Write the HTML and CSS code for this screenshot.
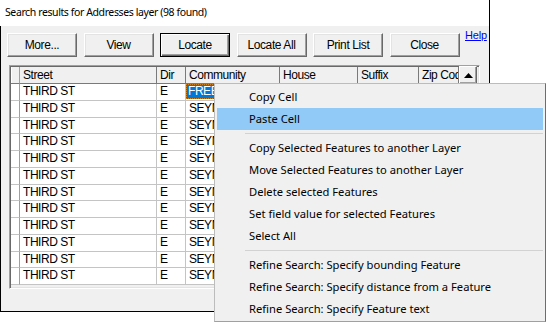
FILE: index.html
```html
<!DOCTYPE html>
<html>
<head>
<meta charset="utf-8">
<link rel="stylesheet" href="styles.css">
</head>
<body>
<div class="window">
  <div class="titlebar">Search results for Addresses layer (98 found)</div>
  <div class="body">
    <div class="toolbar">
      <button class="btn">More...</button>
      <button class="btn">View</button>
      <button class="btn default">Locate</button>
      <button class="btn">Locate All</button>
      <button class="btn">Print List</button>
      <button class="btn">Close</button>
      <a class="help" href="#">Help</a>
    </div>
    <div class="grid">
      <div class="row head">
        <div class="cell rh"></div>
        <div class="cell c-street">Street</div>
        <div class="cell c-dir">Dir</div>
        <div class="cell c-comm">Community</div>
        <div class="cell c-house">House</div>
        <div class="cell c-suffix">Suffix</div>
        <div class="cell c-zip">Zip Cod</div>
        <div class="cell scrollbtn"><svg width="9" height="5" viewBox="0 0 9 5"><path d="M0 5 L4.5 0 L9 5 Z" fill="#000"/></svg></div>
      </div>
      <div class="row"><div class="cell rh"></div><div class="cell c-street">THIRD ST</div><div class="cell c-dir">E</div><div class="cell c-comm"><span class="sel">FREEPORT</span></div><div class="cell c-house"></div><div class="cell c-suffix"></div><div class="cell c-zip"></div></div>
      <div class="row"><div class="cell rh"></div><div class="cell c-street">THIRD ST</div><div class="cell c-dir">E</div><div class="cell c-comm">SEYMOUR</div><div class="cell c-house"></div><div class="cell c-suffix"></div><div class="cell c-zip"></div></div>
      <div class="row"><div class="cell rh"></div><div class="cell c-street">THIRD ST</div><div class="cell c-dir">E</div><div class="cell c-comm">SEYMOUR</div><div class="cell c-house"></div><div class="cell c-suffix"></div><div class="cell c-zip"></div></div>
      <div class="row"><div class="cell rh"></div><div class="cell c-street">THIRD ST</div><div class="cell c-dir">E</div><div class="cell c-comm">SEYMOUR</div><div class="cell c-house"></div><div class="cell c-suffix"></div><div class="cell c-zip"></div></div>
      <div class="row"><div class="cell rh"></div><div class="cell c-street">THIRD ST</div><div class="cell c-dir">E</div><div class="cell c-comm">SEYMOUR</div><div class="cell c-house"></div><div class="cell c-suffix"></div><div class="cell c-zip"></div></div>
      <div class="row"><div class="cell rh"></div><div class="cell c-street">THIRD ST</div><div class="cell c-dir">E</div><div class="cell c-comm">SEYMOUR</div><div class="cell c-house"></div><div class="cell c-suffix"></div><div class="cell c-zip"></div></div>
      <div class="row"><div class="cell rh"></div><div class="cell c-street">THIRD ST</div><div class="cell c-dir">E</div><div class="cell c-comm">SEYMOUR</div><div class="cell c-house"></div><div class="cell c-suffix"></div><div class="cell c-zip"></div></div>
      <div class="row"><div class="cell rh"></div><div class="cell c-street">THIRD ST</div><div class="cell c-dir">E</div><div class="cell c-comm">SEYMOUR</div><div class="cell c-house"></div><div class="cell c-suffix"></div><div class="cell c-zip"></div></div>
      <div class="row"><div class="cell rh"></div><div class="cell c-street">THIRD ST</div><div class="cell c-dir">E</div><div class="cell c-comm">SEYMOUR</div><div class="cell c-house"></div><div class="cell c-suffix"></div><div class="cell c-zip"></div></div>
      <div class="row"><div class="cell rh"></div><div class="cell c-street">THIRD ST</div><div class="cell c-dir">E</div><div class="cell c-comm">SEYMOUR</div><div class="cell c-house"></div><div class="cell c-suffix"></div><div class="cell c-zip"></div></div>
      <div class="row"><div class="cell rh"></div><div class="cell c-street">THIRD ST</div><div class="cell c-dir">E</div><div class="cell c-comm">SEYMOUR</div><div class="cell c-house"></div><div class="cell c-suffix"></div><div class="cell c-zip"></div></div>
      <div class="row"><div class="cell rh"></div><div class="cell c-street">THIRD ST</div><div class="cell c-dir">E</div><div class="cell c-comm">SEYMOUR</div><div class="cell c-house"></div><div class="cell c-suffix"></div><div class="cell c-zip"></div></div>
    </div>
  </div>
</div>

<div class="menu">
  <div class="item">Copy Cell</div>
  <div class="item hover">Paste Cell</div>
  <div class="sep"></div>
  <div class="item">Copy Selected Features to another Layer</div>
  <div class="item">Move Selected Features to another Layer</div>
  <div class="item">Delete selected Features</div>
  <div class="item">Set field value for selected Features</div>
  <div class="item">Select All</div>
  <div class="sep"></div>
  <div class="item">Refine Search: Specify bounding Feature</div>
  <div class="item">Refine Search: Specify distance from a Feature</div>
  <div class="item">Refine Search: Specify Feature text</div>
</div>
</body>
</html>
```

FILE: styles.css
```css
* { box-sizing: border-box; }
html, body {
  margin: 0;
  padding: 0;
  background: #fff;
}
body {
  width: 547px;
  height: 323px;
  overflow: hidden;
  position: relative;
  font-family: "Liberation Sans", Arial, sans-serif;
}
.window {
  width: 490px;
  height: 312px;
  border-right: 1px solid #000;
  border-bottom: 1px solid #000;
  display: flex;
  flex-direction: column;
}
.titlebar {
  height: 26px;
  background: #fff;
  padding-left: 5px;
  padding-top: 5px;
  font-family: "Noto Sans", sans-serif;
  font-size: 10.5px;
  letter-spacing: -0.4px;
  color: #000;
}
.body {
  flex: 1;
  background: #f0f0f0;
  border-left: 1px solid #000;
}
.toolbar {
  display: flex;
  align-items: flex-start;
  gap: 6.5px;
  padding: 7px 0 0 6px;
  height: 31px;
}
.btn {
  width: 70px;
  height: 24px;
  padding: 0;
  margin: 0;
  background: #f0f0f0;
  border: 1px solid;
  border-color: #fff #696969 #696969 #fff;
  box-shadow: inset -1px -1px 0 #a0a0a0, inset 1px 1px 0 #e3e3e3;
  font-family: "Liberation Sans", Arial, sans-serif;
  font-size: 12px;
  letter-spacing: -0.4px;
  color: #000;
}
.btn.default {
  border-color: #000;
  box-shadow: inset 1px 1px 0 #fff, inset -1px -1px 0 #696969, inset -2px -2px 0 #a0a0a0;
}
.help {
  margin-left: -1px;
  margin-top: -4px;
  font-size: 11px;
  letter-spacing: -0.2px;
  color: #0000ff;
  text-decoration: underline;
}
.grid {
  margin: 8px 0 0 8px;
  width: 471px;
  height: 224px;
  border: 1px solid;
  border-color: #a0a0a0 #fff #fff #a0a0a0;
  box-shadow: inset 1px 1px 0 #696969, inset -1px -1px 0 #e3e3e3;
  padding: 1px;
  background: #f0f0f0;
}
.row {
  display: grid;
  grid-template-columns: 9px 137px 29px 94px 78px 61px 40px 18px;
  height: 16.75px;
  font-size: 12px;
  letter-spacing: -0.45px;
  color: #000;
}
.row.head {
  height: 17px;
}
.cell {
  border-right: 1px solid #c4c4c4;
  border-bottom: 1px solid #c4c4c4;
  background: #fff;
  padding-left: 3px;
  line-height: 15px;
  white-space: nowrap;
  overflow: hidden;
}
.head .cell {
  background: #f0f0f0;
  border-color: #7a7a7a;
  line-height: 16px;
}
.head .cell.rh {
  box-shadow: inset 1px 0 0 #fff;
}
.cell.rh {
  padding: 0;
  border-right-color: #a0a0a0;
}
.head .scrollbtn {
  border: 1px solid;
  border-color: #fff #696969 #696969 #fff;
  box-shadow: inset -1px -1px 0 #a0a0a0;
  padding: 0;
  display: flex;
  align-items: center;
  justify-content: center;
  margin-top: -1px;
}
.sel {
  display: block;
  margin-left: -3px;
  padding-left: 2px;
  height: 15px;
  background: #0078d7;
  color: #fff;
  outline: 1px dotted #d08020;
  outline-offset: -1px;
}
.menu {
  position: absolute;
  left: 214px;
  top: 83px;
  width: 332px;
  height: 239px;
  background: #f0f0f0;
  border: 1px solid #bcbcbc;
  border-right-color: #6d6d6d;
  border-bottom-color: #a0a0a0;
  padding: 2px 2px 1px 2px;
  font-family: "Noto Sans", sans-serif;
  font-size: 11.2px;
  color: #000;
}
.item {
  height: 22px;
  line-height: 22px;
  padding-left: 32px;
  white-space: nowrap;
}
.item.hover {
  background: #91c9f7;
}
.sep {
  height: 7px;
  margin-left: 28px;
  position: relative;
}
.sep::after {
  content: "";
  position: absolute;
  left: 0;
  right: 0;
  top: 3px;
  height: 1px;
  background: #d2d2d2;
}
```
